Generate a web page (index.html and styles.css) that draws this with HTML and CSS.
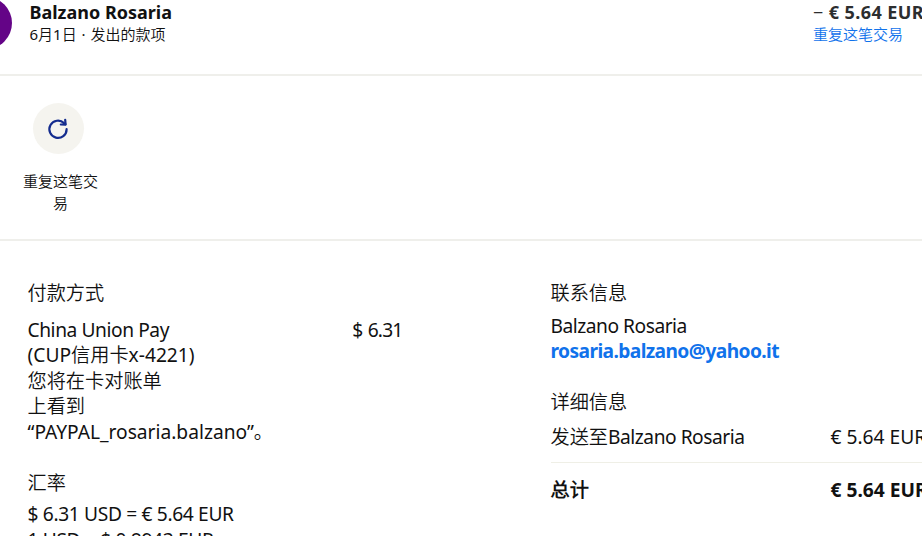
FILE: index.html
```html
<!DOCTYPE html>
<html lang="zh-CN">
<head>
    <meta charset="UTF-8">
    <meta name="viewport" content="width=device-width, initial-scale=1.0">
    <title>Balzano Rosaria</title>
    <link rel="stylesheet" href="styles.css">
</head>
<body>
    <header class="topo">
        <div class="avatar"></div>
        <div class="quem">
            <div class="nome">Balzano Rosaria</div>
            <div class="data">6月1日 · 发出的款项</div>
        </div>
        <div class="valor">
            <div class="total"><span class="menos">−</span> € 5.64 EUR</div>
            <a class="repetir">重复这笔交易</a>
        </div>
    </header>

    <section class="acoes">
        <div class="acao">
            <div class="circulo">
                <svg width="24" height="24" viewBox="0 0 24 24" fill="none" stroke="#142c8e" stroke-width="2.2" stroke-linecap="round" stroke-linejoin="round">
                    <path d="M20.6 12.2A8.6 8.6 0 1 1 18 6.1L19.4 7.2"/>
                    <path d="M19.2 2.9L19.6 7.6L14.8 7.5"/>
                </svg>
            </div>
            <p>重复这笔交易</p>
        </div>
    </section>

    <main class="detalhes">
        <div class="esquerda">
            <h2>付款方式</h2>
            <div class="linha pagamento">
                <p>
                    <span class="banco">China Union Pay</span><br>
                    (CUP信用卡x-4221)<br>
                    您将在卡对账单<br>
                    上看到<br>
                    “PAYPAL_rosaria.balzano”。
                </p>
                <span class="dolar">$ 6.31</span>
            </div>
            <h2 class="cambio">汇率</h2>
            <p class="taxa">$ 6.31 USD = € 5.64 EUR<br>1 USD = $ 0.8943 EUR</p>
        </div>

        <div class="direita">
            <h2>联系信息</h2>
            <p class="contato">
                <span class="pessoa">Balzano Rosaria</span><br>
                <a class="email">rosaria.balzano@yahoo.it</a>
            </p>
            <h2 class="info">详细信息</h2>
            <div class="linha enviado">
                <span>发送至<span class="pessoa">Balzano Rosaria</span></span>
                <span class="preco">€ 5.64 EUR</span>
            </div>
            <div class="linha soma">
                <span>总计</span>
                <span class="preco">€ 5.64 EUR</span>
            </div>
        </div>
    </main>
</body>
</html>
```

FILE: styles.css
```css
*{
    box-sizing: border-box;
}

body{
    margin: 0;
    height: 536px;
    overflow: hidden;
    background-color: white;
    color: #111;
    font-family: "Noto Sans", "Noto Sans CJK SC DemiLight", "Noto Sans CJK SC", sans-serif;
    font-size: 19.2px;
    line-height: 25.6px;
    white-space: nowrap;
}

h2, p{
    margin: 0;
    font-size: 19.2px;
    font-weight: 400;
}

.topo{
    display: flex;
    height: 76px;
    border-bottom: 2px solid #efefeb;
}

.avatar{
    flex: none;
    width: 52px;
    height: 52px;
    margin-left: -40.5px;
    margin-top: -3px;
    border-radius: 50%;
    background-color: #640487;
}

.quem{
    flex: none;
    width: 783.5px;
    margin-left: 18px;
}

.nome{
    font-size: 18px;
    font-weight: 700;
    line-height: 24px;
}

.data, .repetir{
    display: block;
    font-size: 15px;
    line-height: 20px;
}

.data{
    word-spacing: 1px;
}

.total{
    font-size: 18px;
    font-weight: 700;
    line-height: 24px;
    letter-spacing: 0.4px;
    color: #2c2e2f;
}

.menos{
    font-weight: 400;
}

.repetir, .email{
    color: #1072eb;
}

.acoes{
    height: 165px;
    padding: 27px 0 0 20px;
    border-bottom: 2px solid #efefeb;
}

.acao{
    width: 81px;
}

.circulo{
    display: flex;
    align-items: center;
    justify-content: center;
    width: 51px;
    height: 51px;
    margin-left: 12.5px;
    border-radius: 50%;
    background-color: #f5f4ef;
}

.acao p{
    margin-top: 16px;
    font-size: 15px;
    line-height: 22px;
    text-align: center;
    white-space: normal;
}

.detalhes{
    display: grid;
    grid-template-columns: 523px 395px;
    padding: 39px 0 0 27.5px;
}

.linha{
    display: flex;
    justify-content: space-between;
}

.pagamento{
    width: 375px;
    margin-top: 11px;
}

.banco{
    letter-spacing: -0.43px;
}

.dolar{
    letter-spacing: -0.8px;
    word-spacing: 1px;
}

.cambio{
    margin-top: 25px;
}

.taxa{
    margin-top: 6px;
    letter-spacing: -0.35px;
}

.contato{
    margin-top: 7px;
}

.pessoa{
    letter-spacing: -0.48px;
}

.email{
    font-weight: 700;
    letter-spacing: -0.6px;
}

.info{
    margin-top: 25px;
}

.enviado{
    height: 49px;
    padding-top: 10px;
    border-bottom: 1px solid #efefe6;
}

.soma{
    padding-top: 14px;
    font-weight: 700;
}

.preco{
    width: 115px;
}
```
